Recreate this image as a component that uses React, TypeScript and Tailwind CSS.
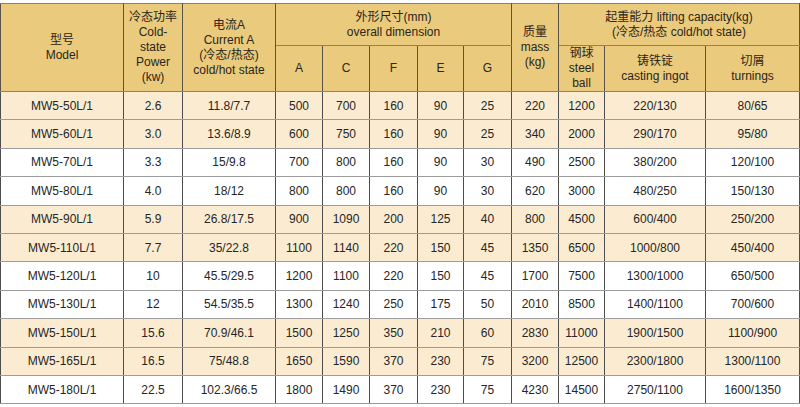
const cols = [123, 59, 93, 47, 47, 48, 46, 48, 47, 46, 101, 94];

const rows = [
    ['MW5-50L/1', '2.6', '11.8/7.7', '500', '700', '160', '90', '25', '220', '1200', '220/130', '80/65'],
    ['MW5-60L/1', '3.0', '13.6/8.9', '600', '750', '160', '90', '25', '340', '2000', '290/170', '95/80'],
    ['MW5-70L/1', '3.3', '15/9.8', '700', '800', '160', '90', '30', '490', '2500', '380/200', '120/100'],
    ['MW5-80L/1', '4.0', '18/12', '800', '800', '160', '90', '30', '620', '3000', '480/250', '150/130'],
    ['MW5-90L/1', '5.9', '26.8/17.5', '900', '1090', '200', '125', '40', '800', '4500', '600/400', '250/200'],
    ['MW5-110L/1', '7.7', '35/22.8', '1100', '1140', '220', '150', '45', '1350', '6500', '1000/800', '450/400'],
    ['MW5-120L/1', '10', '45.5/29.5', '1200', '1100', '220', '150', '45', '1700', '7500', '1300/1000', '650/500'],
    ['MW5-130L/1', '12', '54.5/35.5', '1300', '1240', '250', '175', '50', '2010', '8500', '1400/1100', '700/600'],
    ['MW5-150L/1', '15.6', '70.9/46.1', '1500', '1250', '350', '210', '60', '2830', '11000', '1900/1500', '1100/900'],
    ['MW5-165L/1', '16.5', '75/48.8', '1650', '1590', '370', '230', '75', '3200', '12500', '2300/1800', '1300/1100'],
    ['MW5-180L/1', '22.5', '102.3/66.5', '1800', '1490', '370', '230', '75', '4230', '14500', '2750/1100', '1600/1350'],
];

const th = 'border-x border-x-[#5a5346] border-y border-y-[#8f8268] bg-[#eaca7d] text-center align-middle font-normal leading-[15px] text-[#2b2618]';
const td = 'border-x border-x-[#4d4d4d] border-y border-y-[#9c9c9c] text-center align-middle';

export default function App() {
    return (
        <div className="w-[800px] h-[407px] bg-white pt-[3px] font-['Liberation_Sans','Noto_Sans_CJK_SC',sans-serif] text-[12px] text-[#262626]">
            <table className="w-[800px] table-fixed border-collapse border border-[#4d4d4d]">
                <colgroup>
                    {cols.map((w, i) => (
                        <col key={i} style={{ width: w }} />
                    ))}
                </colgroup>
                <thead>
                    <tr className="h-[42px]">
                        <th rowSpan={2} className={th}>
                            型号<br />Model
                        </th>
                        <th rowSpan={2} className={th}>
                            冷态功率<br />Cold-<br />state<br />Power<br />(kw)
                        </th>
                        <th rowSpan={2} className={th}>
                            电流A<br />Current A<br />(冷态/热态)<br />cold/hot state
                        </th>
                        <th colSpan={5} className={th}>
                            外形尺寸(mm)<br />overall dimension
                        </th>
                        <th rowSpan={2} className={th}>
                            质量<br />mass<br />(kg)
                        </th>
                        <th colSpan={3} className={th}>
                            起重能力 lifting capacity(kg)<br />(冷态/热态 cold/hot state)
                        </th>
                    </tr>
                    <tr className="h-[46px]">
                        <th className={th}>A</th>
                        <th className={th}>C</th>
                        <th className={th}>F</th>
                        <th className={th}>E</th>
                        <th className={th}>G</th>
                        <th className={th}>
                            钢球<br />steel<br />ball
                        </th>
                        <th className={th}>
                            铸铁锭<br />casting ingot
                        </th>
                        <th className={th}>
                            切屑<br />turnings
                        </th>
                    </tr>
                </thead>
                <tbody>
                    {rows.map((r, i) => (
                        <tr key={r[0]} className={i % 4 < 2 && i !== 10 ? 'h-[28.4px] bg-[#fbecd1]' : 'h-[28.4px] bg-white'}>
                            {r.map((c, j) => (
                                <td key={j} className={td}>
                                    {c}
                                </td>
                            ))}
                        </tr>
                    ))}
                </tbody>
            </table>
        </div>
    );
}
